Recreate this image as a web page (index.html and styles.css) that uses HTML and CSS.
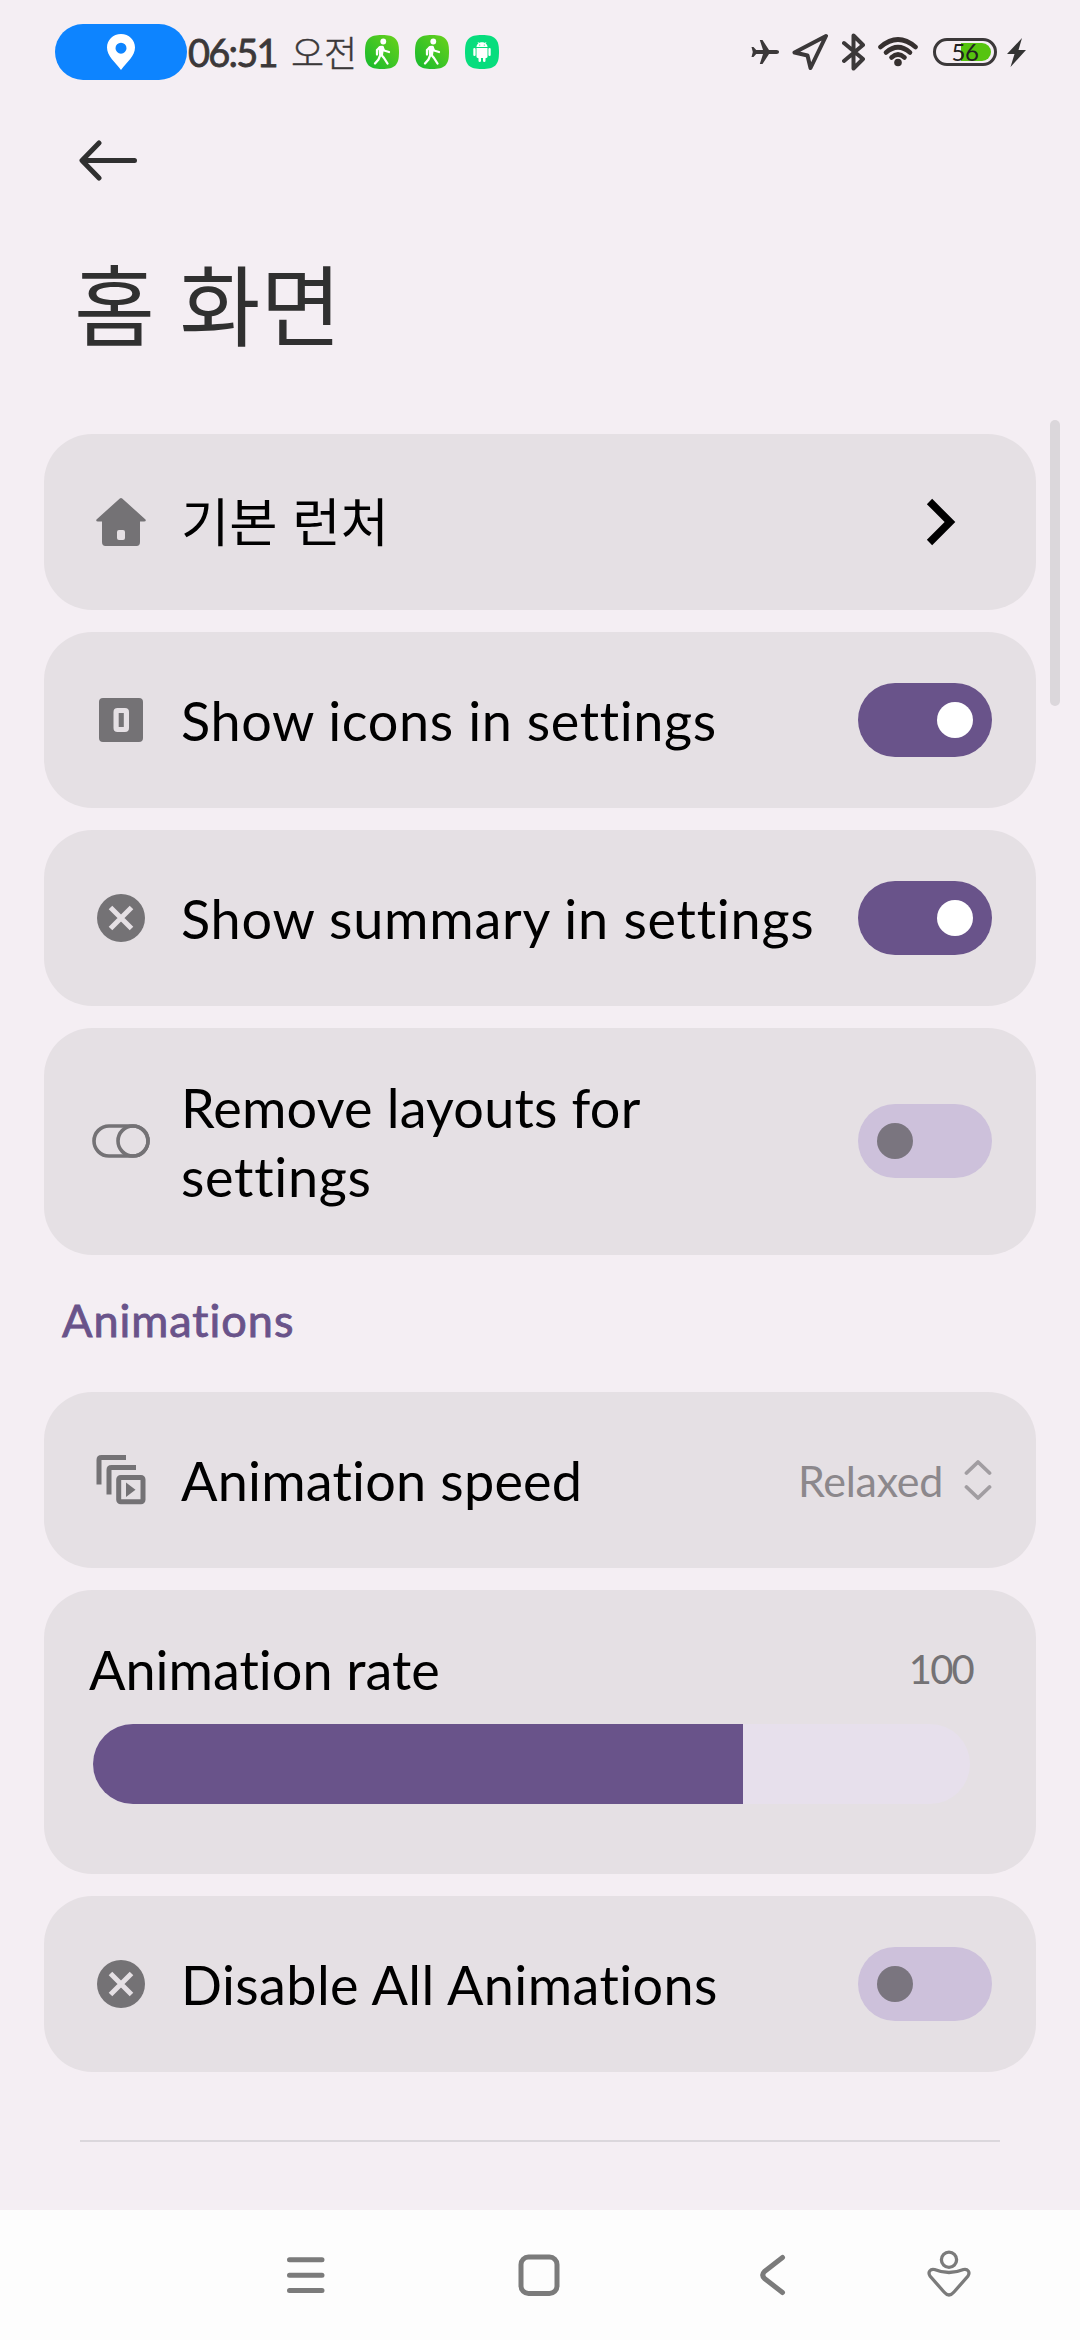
FILE: index.html
```html
<!DOCTYPE html>
<html lang="ko">
<head>
<meta charset="utf-8">
<title>홈 화면</title>
<link rel="stylesheet" href="styles.css">
</head>
<body>
<div class="screen">
  <header class="status">
    <div class="status-left">
      <span class="location-pill">
        <svg width="28" height="36" viewBox="0 0 28 36"><path fill="#fff" fill-rule="evenodd" d="M14 0C6 0 0 6 0 13.500C0 22 8 28 14 36C20 28 28 22 28 13.500C28 6 22 0 14 0ZM14 8.700a5.500 5.500 0 1 1 0 11a5.500 5.500 0 0 1 0-11Z"/></svg>
      </span>
      <span class="clock">06:51</span>
      <span class="meridiem">오전</span>
      <span class="app-icons">
        <svg width="34" height="34" viewBox="0 0 34 34"><defs><linearGradient id="walk" x1="0" y1="1" x2="1" y2="0"><stop offset="0" stop-color="#14b92e"/><stop offset="1" stop-color="#6ad21b"/></linearGradient></defs><path fill="url(#walk)" d="M17 0C30 0 34 4 34 17S30 34 17 34S0 30 0 17S4 0 17 0Z"/><circle cx="18.300" cy="6.500" r="2.900" fill="#fff"/><path d="M16 12.500L15.500 20M15.500 19.500L13.500 24.500L10 28.500M16 19.500L19 23L22.500 28.500M14.500 12.500L12 15V19.500M17.500 12L19 15.500L24 17" fill="none" stroke="#fff" stroke-width="2.300" stroke-linecap="round" stroke-linejoin="round"/><path d="M13.500 12Q15 10 18 11L19 13L18 20H14Z" fill="#fff"/></svg>
        <svg width="34" height="34" viewBox="0 0 34 34"><path fill="url(#walk)" d="M17 0C30 0 34 4 34 17S30 34 17 34S0 30 0 17S4 0 17 0Z"/><circle cx="18.300" cy="6.500" r="2.900" fill="#fff"/><path d="M16 12.500L15.500 20M15.500 19.500L13.500 24.500L10 28.500M16 19.500L19 23L22.500 28.500M14.500 12.500L12 15V19.500M17.500 12L19 15.500L24 17" fill="none" stroke="#fff" stroke-width="2.300" stroke-linecap="round" stroke-linejoin="round"/><path d="M13.500 12Q15 10 18 11L19 13L18 20H14Z" fill="#fff"/></svg>
        <svg width="34" height="34" viewBox="0 0 34 34"><path fill="#07dd7d" d="M17 0C30 0 34 4 34 17S30 34 17 34S0 30 0 17S4 0 17 0Z"/><g fill="#fff"><path d="M11.500 12C11.500 5.500 22.500 5.500 22.500 12Z"/><path d="M11.500 13H22.500V21.500a1.500 1.500 0 0 1-1.500 1.500H13a1.500 1.500 0 0 1-1.500-1.500Z"/><rect x="8.300" y="13" width="2.300" height="8" rx="1.100"/><rect x="23.400" y="13" width="2.300" height="8" rx="1.100"/><rect x="13.500" y="22" width="2.500" height="5" rx="1.200"/><rect x="18" y="22" width="2.500" height="5" rx="1.200"/></g><path d="M13 7L14 9M21 7L20 9" stroke="#fff" stroke-width=".7"/><circle cx="14.700" cy="10" r=".6" fill="#07dd7d"/><circle cx="19.300" cy="10" r=".6" fill="#07dd7d"/></svg>
      </span>
    </div>
    <div class="status-right">
      <svg class="plane" width="28" height="26" viewBox="0 0 28 26"><path fill="#3b3839" d="M28 13c0 1.200-1 1.900-2.500 1.900H18L11.500 25H8.800L12 14.900H5.200L2.500 18H.5L1.800 13L.5 8H2.500L5.200 11.100H12L8.800 1H11.500L18 11.100h7.500C27 11.100 28 11.800 28 13Z"/></svg>
      <svg class="arrow" width="36" height="38" viewBox="0 0 36 38"><path d="M34 3L2.500 19.500L15.500 22.500L18.500 35Z" fill="none" stroke="#3b3839" stroke-width="4" stroke-linejoin="round"/></svg>
      <svg class="bt" width="24" height="38" viewBox="0 0 24 38"><path d="M2 10L21 26L11.500 35.500V2.500L21 12L2 28" fill="none" stroke="#3b3839" stroke-width="4" stroke-linecap="round" stroke-linejoin="round"/></svg>
      <svg class="wifi" width="40" height="30" viewBox="0 0 40 30"><g fill="none" stroke="#36302f" stroke-width="4.600" stroke-linecap="round"><path d="M2.500 10Q20-5 37.500 10"/><path d="M8 15.500Q20 5 32 15.500"/><path d="M13.500 20.500Q20 14.500 26.500 20.500"/></g><circle cx="20" cy="25.500" r="3.800" fill="#36302f"/></svg>
      <span class="battery"><span class="battery-fill"></span><span class="battery-text">56</span></span>
      <svg class="bolt" width="19" height="29" viewBox="0 0 19 29"><path fill="#333" d="M15 0L0 16H7.500L3.500 29L19 12H11.500Z"/></svg>
    </div>
  </header>

  <div class="toolbar">
    <svg width="60" height="42" viewBox="0 0 60 42"><path d="M21 3L4 20.500L21 38M4.500 20.500H56.500" fill="none" stroke="#303030" stroke-width="5" stroke-linecap="round" stroke-linejoin="round"/></svg>
  </div>
  <h1 class="title">홈 화면</h1>

  <main class="list">
    <section class="card">
      <svg class="icon" viewBox="0 0 60 60"><path fill="#747275" fill-rule="evenodd" d="M28.800 6.500Q30 5.500 31.200 6.500L54.500 27.500Q55.500 29.500 53 29.500H49V50Q49 54 45.500 54H14.500Q11 54 11 50V29.500H7Q4.500 29.500 5.500 27.500ZM28 38Q26 38 26 40V46Q26 48 28 48H32Q34 48 34 46V40Q34 38 32 38Z"/></svg>
      <span class="label ko">기본 런처</span>
      <svg class="chevron" width="30" height="48" viewBox="0 0 30 48"><path d="M3.500 3.500L24 24L3.500 44.500" fill="none" stroke="#000" stroke-width="7.500"/></svg>
    </section>

    <section class="card">
      <svg class="icon" viewBox="0 0 60 60"><path fill="#747275" fill-rule="evenodd" d="M12 8H48Q52 8 52 12V48Q52 52 48 52H12Q8 52 8 48V12Q8 8 12 8ZM26.500 18Q22.500 18 22.500 22V38Q22.500 42 26.500 42H34Q38 42 38 38V22Q38 18 34 18ZM27.700 23H32.800V37H27.700Z"/></svg>
      <span class="label icons-label">Show icons in settings</span>
      <span class="switch on"></span>
    </section>

    <section class="card">
      <svg class="icon" viewBox="0 0 60 60"><circle cx="30" cy="30" r="24" fill="#747275"/><path d="M19.500 19.500L40.500 40.500M40.500 19.500L19.500 40.500" stroke="#e5e0e4" stroke-width="5"/></svg>
      <span class="label summary-label">Show summary in settings</span>
      <span class="switch on"></span>
    </section>

    <section class="card tall">
      <svg class="icon" viewBox="0 0 60 60"><g fill="none" stroke="#747275" stroke-width="3.600"><rect x="3" y="14" width="54" height="30" rx="15"/><circle cx="42" cy="29" r="15"/></g></svg>
      <span class="label layouts-label">Remove layouts for<br><span class="second-line">settings</span></span>
      <span class="switch"></span>
    </section>

    <h2 class="group">Animations</h2>

    <section class="card">
      <svg class="icon" viewBox="0 0 60 60"><g fill="none" stroke="#747275" stroke-width="5"><path d="M8 34.500V10Q8 7.500 10.500 7.500H35"/><path d="M18 44.500V20Q18 17.500 20.500 17.500H45"/><rect x="27.700" y="27.500" width="24.300" height="24.300" rx="2"/></g><path d="M35 32.500L44.500 39.700L35 47Z" fill="#747275"/></svg>
      <span class="label speed-label">Animation speed</span>
      <span class="value">Relaxed</span>
      <svg class="updown" width="28" height="42" viewBox="0 0 28 42"><path d="M2.500 14L14 3L25.500 14M2.500 28L14 39L25.500 28" fill="none" stroke="#a19da1" stroke-width="3.800" stroke-linecap="round" stroke-linejoin="round"/></svg>
    </section>

    <section class="card rate">
      <div class="rate-head"><span class="label rate-label">Animation rate</span><span class="rate-value">100</span></div>
      <div class="track"><div class="fill" style="width:650px"></div></div>
    </section>

    <section class="card">
      <svg class="icon" viewBox="0 0 60 60"><circle cx="30" cy="30" r="24" fill="#747275"/><path d="M19.500 19.500L40.500 40.500M40.500 19.500L19.500 40.500" stroke="#e5e0e4" stroke-width="5"/></svg>
      <span class="label disable-label">Disable All Animations</span>
      <span class="switch"></span>
    </section>
    <hr class="divider">
  </main>

  <nav class="nav">
    <svg class="nav-menu" width="40" height="50" viewBox="0 0 40 50"><path d="M3.500 9.800H36M3.500 25.200H36M3.500 40.500H36" stroke="#7b7b7b" stroke-width="5" stroke-linecap="round"/></svg>
    <svg class="nav-home" width="42" height="50" viewBox="0 0 42 50"><rect x="3" y="7" width="36" height="36.500" rx="7.500" fill="none" stroke="#7b7b7b" stroke-width="5"/></svg>
    <svg class="nav-back" width="28" height="50" viewBox="0 0 28 50"><path d="M23.500 7.500L5.500 21.500Q2 25 5.500 28.500L23.500 42.500" fill="none" stroke="#7b7b7b" stroke-width="5" stroke-linecap="round" stroke-linejoin="round"/></svg>
    <svg class="nav-person" width="44" height="50" viewBox="0 0 44 50"><g fill="none" stroke="#7b7b7b" stroke-width="3.300"><circle cx="22" cy="9.700" r="7.600"/><path d="M7.500 19.500Q22 25.500 36.500 19.500C40.500 18.500 43.500 22 41 26L27 42Q22 48 17 42L3 26C.5 22 3.500 18.500 7.500 19.500Z"/></g></svg>
  </nav>
  <div class="scrollbar"></div>
</div>
</body>
</html>
```
FILE: styles.css
```css
* { box-sizing: border-box; }
body { margin: 0; }
svg { display: block; flex: none; }

.screen {
  position: relative;
  width: 1080px;
  height: 2340px;
  overflow: hidden;
  display: flex;
  flex-direction: column;
  background: #f4eef3;
  font-family: Lato, "Noto Sans CJK KR", sans-serif;
  font-variant-ligatures: none;
  color: #000;
}

/* Status bar */
.status {
  height: 104px;
  flex: none;
  display: flex;
  justify-content: space-between;
  padding: 0 54px 0 55px;
}
.status-left, .status-right { display: flex; align-items: center; }
.location-pill {
  width: 132px;
  height: 56px;
  border-radius: 28px;
  background: #0d84ff;
  display: flex;
  align-items: center;
  justify-content: center;
}
.clock {
  width: 104px;
  padding-left: 1px;
  font-family: Lato, sans-serif;
  font-size: 38px;
  line-height: 56px;
  letter-spacing: -1.8px;
  -webkit-text-stroke: 0.8px #3b3839;
  color: #3b3839;
  white-space: nowrap;
}
.meridiem {
  width: 74px;
  padding-bottom: 2px;
  font-family: "Noto Sans CJK KR", sans-serif;
  font-size: 36px;
  font-weight: 300;
  line-height: 56px;
  -webkit-text-stroke: 0.4px #3b3839;
  color: #3b3839;
  white-space: nowrap;
}
.app-icons { display: flex; gap: 16px; }
.plane { margin-right: 13px; }
.arrow { margin-right: 14px; }
.bt { margin-right: 12px; }
.wifi { margin-right: 15px; }
.battery {
  position: relative;
  width: 64px;
  height: 28px;
  border: 3px solid #3b3839;
  border-radius: 14px;
  margin-right: 10px;
  display: flex;
  align-items: center;
  justify-content: center;
}
.battery-fill {
  position: absolute;
  left: 25px;
  top: 2px;
  width: 30px;
  height: 18px;
  border-radius: 0 9px 9px 0;
  background: #56c40f;
}
.battery-text {
  position: relative;
  font-size: 24px;
  line-height: 22px;
  letter-spacing: -0.5px;
  color: #222;
}

/* Heading */
.toolbar { height: 112px; flex: none; padding: 36px 0 0 78px; }
.title {
  margin: 0;
  height: 218px;
  flex: none;
  padding: 20px 0 0 74px;
  font-family: "Noto Sans CJK KR", sans-serif;
  font-size: 88px;
  font-weight: 400;
  line-height: 130px;
  color: #303030;
}

/* Settings list */
.list {
  height: 1776px;
  flex: none;
  padding: 0 44px;
  display: flex;
  flex-direction: column;
  gap: 22px;
}
.card {
  height: 176px;
  flex: none;
  display: flex;
  align-items: center;
  padding: 0 44px 0 47px;
  border-radius: 48px;
  background: #e5e0e4;
}
.card.tall { height: 227px; }
.icon { width: 60px; height: 60px; margin-right: 30px; }
.label {
  flex: 1;
  font-size: 54px;
  line-height: 69px;
  white-space: nowrap;
}
.label.ko {
  padding-bottom: 5px;
  font-family: "Noto Sans CJK KR", sans-serif;
  font-size: 52.500px;
}
.icons-label { letter-spacing: 0.6px; }
.summary-label { letter-spacing: 0.75px; }
.layouts-label { letter-spacing: 0.2px; }
.second-line { letter-spacing: 0.7px; }
.speed-label { letter-spacing: 0.2px; }
.disable-label { letter-spacing: 0.4px; }
.chevron { margin-right: 36px; }

.switch {
  width: 134px;
  height: 74px;
  flex: none;
  display: flex;
  padding: 19px;
  border-radius: 37px;
  background: #cdc1db;
}
.switch::before {
  content: "";
  width: 36px;
  height: 36px;
  border-radius: 50%;
  background: #7a757f;
}
.switch.on { justify-content: flex-end; background: #69538a; }
.switch.on::before { background: #fff; }
.card.tall .switch { margin-bottom: 1px; }

.group {
  margin: 0;
  height: 93px;
  flex: none;
  padding: 8px 0 0 18px;
  font-size: 45px;
  font-weight: 400;
  line-height: 70px;
  letter-spacing: 1px;
  -webkit-text-stroke: 0.9px #69538a;
  color: #69538a;
}
.value { font-size: 43px; letter-spacing: -0.3px; color: #8c888c; margin-right: 21px; }

.card.rate {
  height: 284px;
  flex-direction: column;
  align-items: stretch;
  padding: 46px 63px 0 45px;
}
.rate-head { display: flex; align-items: center; height: 88px; padding-bottom: 22px; }
.rate-value { font-size: 40px; letter-spacing: -1.8px; color: #747275; }
.track {
  width: 877px;
  height: 80px;
  margin-left: 4px;
  border-radius: 40px;
  overflow: hidden;
  background: #e7e0ec;
}
.fill { height: 100%; background: #69538a; }
.divider {
  width: 920px;
  height: 2px;
  flex: none;
  margin: 46px 36px 0;
  border: 0;
  background: #dbd7dc;
}

/* Navigation bar */
.nav {
  height: 130px;
  flex: none;
  display: flex;
  align-items: center;
  padding-left: 286px;
  background: #fdfdfd;
}
.nav-menu { margin-right: 192px; }
.nav-home { margin-right: 199px; }
.nav-back { margin-right: 140px; }

.scrollbar {
  position: absolute;
  left: 1050px;
  top: 420px;
  width: 10px;
  height: 286px;
  border-radius: 5px;
  background: #dbd7db;
}
```
